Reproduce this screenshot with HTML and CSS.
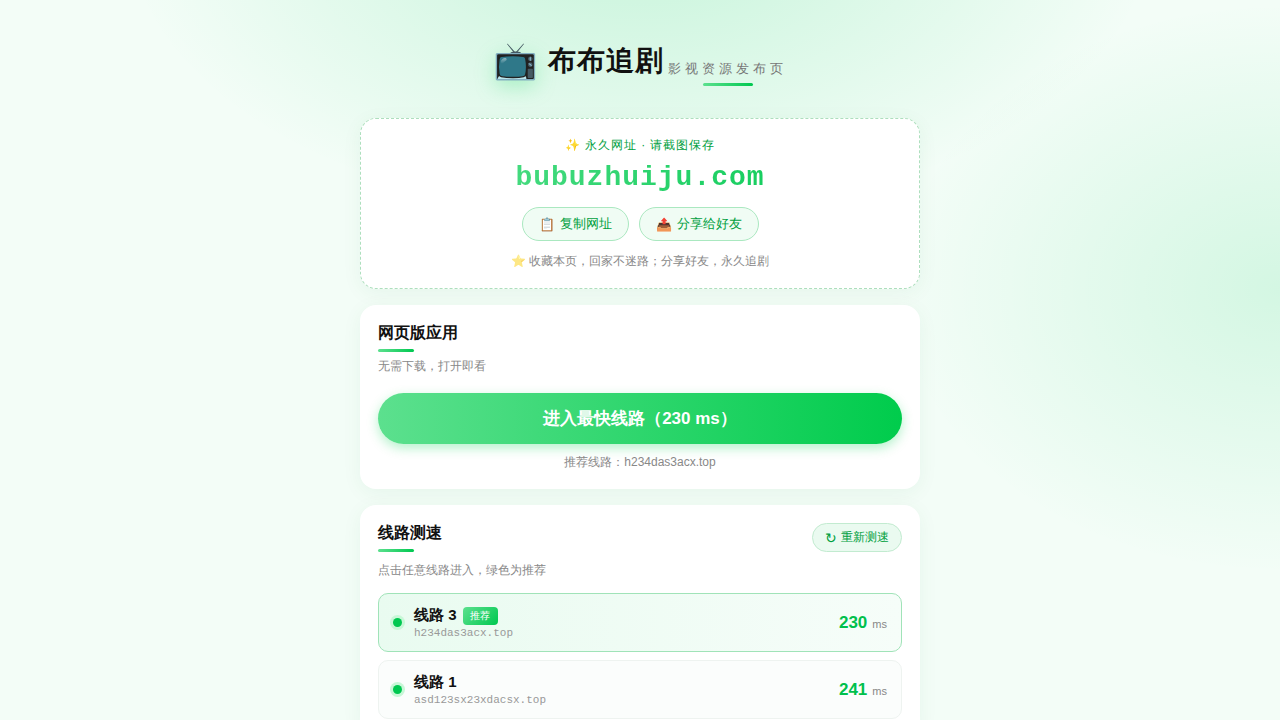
FILE: index.html
```html
<!DOCTYPE html>
<html lang="en">
<head>
<meta charset="UTF-8">
<meta name="viewport" content="width=device-width, initial-scale=1.0">
<title>布布追剧 - 影视资源发布页</title>
<link rel="stylesheet" href="styles.css">
</head>
<body>

<div class="container">
    <header class="header">
        <div class="brand">
            <span class="logo">📺</span>
            <h1>布布追剧</h1>
        </div>
        <p class="tagline">影视资源发布页</p>
    </header>

    <section class="card permanent">
        <div class="permanent-label">✨ 永久网址 · 请截图保存</div>
        <div class="permanent-url">bubuzhuiju.com</div>
        <div class="actions">
            <button class="action-btn"><span>📋</span>复制网址</button>
            <button class="action-btn"><span>📤</span>分享给好友</button>
        </div>
        <div class="permanent-tip"><span>⭐</span> 收藏本页，回家不迷路；分享好友，永久追剧</div>
    </section>

    <section class="card">
        <h2>网页版应用</h2>
        <p class="desc">无需下载，打开即看</p>
        <button class="enter-btn">进入最快线路（230 ms）</button>
        <p class="recommend">推荐线路：h234das3acx.top</p>
    </section>

    <section class="card">
        <div class="card-head">
            <h2>线路测速</h2>
            <button class="retest-btn"><span>↻</span>重新测速</button>
        </div>
        <p class="desc line-desc">点击任意线路进入，绿色为推荐</p>
        <div class="line-list">
            <a class="line best">
                <span class="dot"></span>
                <div class="line-info">
                    <div class="line-name">线路 3<span class="tag">推荐</span></div>
                    <div class="line-host">h234das3acx.top</div>
                </div>
                <div class="latency">230<small>ms</small></div>
            </a>
            <a class="line">
                <span class="dot"></span>
                <div class="line-info">
                    <div class="line-name">线路 1</div>
                    <div class="line-host">asd123sx23xdacsx.top</div>
                </div>
                <div class="latency">241<small>ms</small></div>
            </a>
        </div>
    </section>
</div>

</body>
</html>
```
FILE: styles.css
```css
* {
    box-sizing: border-box;
    margin: 0;
    padding: 0;
}

body {
    height: 100vh;
    overflow: hidden;
    font-family: "Liberation Sans", sans-serif;
    color: #111;
    background:
        radial-gradient(860px 490px at 50% -10%, rgba(0, 204, 90, 0.19), transparent 60%),
        radial-gradient(640px 475px at 100% 40%, rgba(0, 204, 90, 0.13), transparent 60%),
        #f3fdf7;
}

button {
    font-family: inherit;
    cursor: pointer;
}

.container {
    width: 560px;
    margin: 0 auto;
    padding-top: 36px;
}

.header {
    height: 82px;
    text-align: center;
}

.brand {
    display: inline-flex;
    align-items: center;
    gap: 10px;
}

.logo {
    font-size: 36px;
    line-height: 50px;
    filter: drop-shadow(0 6px 10px rgba(0, 210, 80, 0.25));
}

h1 {
    font-size: 28px;
    line-height: 34px;
    letter-spacing: 1px;
}

.tagline {
    display: inline-block;
    font-size: 13px;
    line-height: 20px;
    letter-spacing: 4px;
    color: #777;
}

.tagline::after {
    content: "";
    display: block;
    width: 50px;
    height: 3px;
    margin: 4px auto -7px;
    border-radius: 2px;
    background: linear-gradient(90deg, #5ce08e, #00c850);
}

.card {
    margin-bottom: 16px;
    padding: 18px;
    border-radius: 16px;
    background: #fff;
    box-shadow: 0 4px 20px rgba(0, 120, 50, 0.06);
}

.permanent {
    height: 171px;
    text-align: center;
    border: 1px dashed #addfbd;
}

.permanent-label {
    font-size: 12px;
    line-height: 16px;
    letter-spacing: 1px;
    color: #00a040;
}

.permanent-url {
    margin-top: 9px;
    font-family: "Liberation Mono", monospace;
    font-size: 28px;
    font-weight: bold;
    line-height: 32px;
    letter-spacing: 1px;
    color: transparent;
    background: linear-gradient(90deg, #5ce08e, #00c850);
    -webkit-background-clip: text;
    background-clip: text;
}

.actions {
    display: flex;
    justify-content: center;
    gap: 10px;
    margin-top: 13px;
}

.action-btn {
    display: flex;
    align-items: center;
    gap: 5px;
    height: 34px;
    padding: 0 16px;
    font-size: 13px;
    color: #00a040;
    border: 1px solid #aae8c0;
    border-radius: 17px;
    background: #f0fcf4;
}

.permanent-tip {
    margin-top: 12px;
    font-size: 12px;
    line-height: 16px;
    color: #888;
}

.permanent-tip span {
    opacity: 0.6;
}

h2 {
    font-size: 16px;
    line-height: 20px;
}

h2::after {
    content: "";
    display: block;
    width: 36px;
    height: 3px;
    margin-top: 6px;
    border-radius: 2px;
    background: linear-gradient(90deg, #5ce08e, #00c850);
}

.desc,
.recommend {
    font-size: 12px;
    line-height: 16px;
    color: #888;
}

.desc {
    margin-top: 6px;
}

.enter-btn {
    display: block;
    width: 100%;
    height: 51px;
    margin: 19px 0 10px;
    font-size: 17px;
    font-weight: bold;
    color: #fff;
    border: none;
    border-radius: 26px;
    background: linear-gradient(90deg, #5ce08e, #00cc4c);
    box-shadow: 0 4px 12px rgba(0, 210, 80, 0.3);
}

.recommend {
    margin-bottom: 1px;
    text-align: center;
}

.card-head {
    display: flex;
    justify-content: space-between;
    align-items: flex-start;
}

.retest-btn {
    display: flex;
    align-items: center;
    gap: 4px;
    height: 29px;
    padding: 0 12px;
    font-size: 12px;
    color: #00a040;
    border: 1px solid #c2ebd0;
    border-radius: 15px;
    background: #eafaf0;
}

.retest-btn span {
    font-size: 14px;
}

.line-desc {
    margin-top: 10px;
}

.line-list {
    display: flex;
    flex-direction: column;
    gap: 8px;
    margin-top: 15px;
}

.line {
    display: flex;
    align-items: center;
    height: 59px;
    padding: 0 14px;
    border: 1px solid #eef3f0;
    border-radius: 10px;
    background: #fbfdfc;
}

.line.best {
    border-color: #a0e3b8;
    background: linear-gradient(90deg, #e9fbf0, #f6fdf9);
}

.dot {
    width: 9px;
    height: 9px;
    margin-right: 12px;
    border-radius: 50%;
    background: #00c850;
    box-shadow: 0 0 0 3px #c8f7d7;
}

.line-info {
    flex: 1;
}

.line-name {
    display: flex;
    align-items: center;
    gap: 6px;
    height: 18px;
    font-size: 15px;
    font-weight: bold;
}

.tag {
    padding: 0 7px;
    font-size: 10px;
    font-weight: 500;
    line-height: 18px;
    letter-spacing: 0.5px;
    color: #fff;
    border-radius: 4px;
    background: linear-gradient(135deg, #5ce08e, #00c850);
}

.line-host {
    margin-top: 2px;
    font-family: "Liberation Mono", monospace;
    font-size: 11px;
    line-height: 12px;
    color: #999;
}

.latency {
    font-size: 17px;
    font-weight: bold;
    color: #00c04c;
}

.latency small {
    margin-left: 5px;
    font-size: 11px;
    font-weight: normal;
    color: #888;
}
```
